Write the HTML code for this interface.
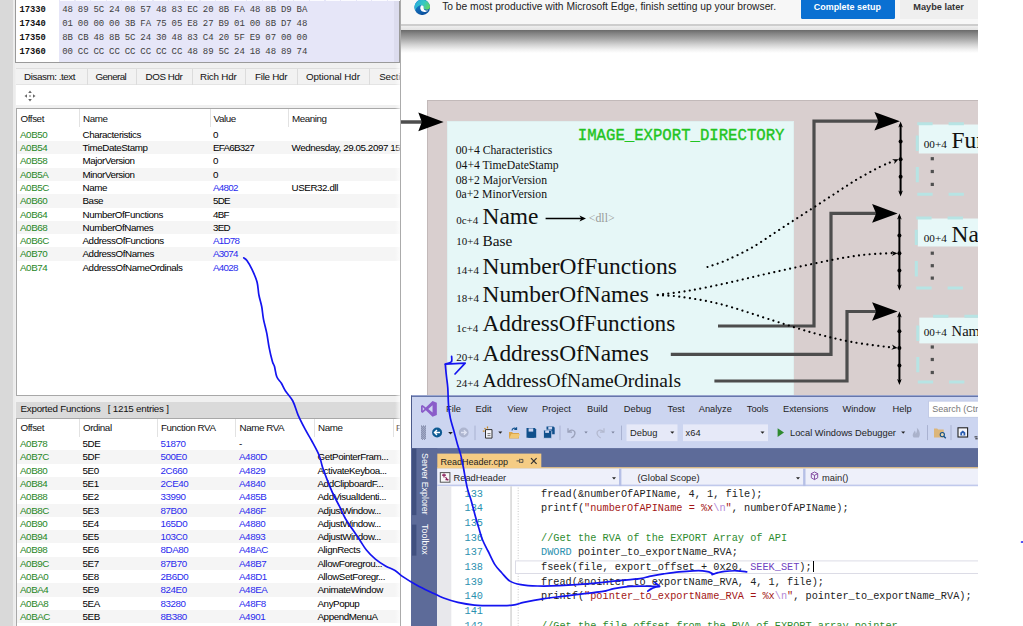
<!DOCTYPE html>
<html><head><meta charset="utf-8"><title>PE export directory</title>
<style>
*{box-sizing:border-box;margin:0;padding:0}
html,body{width:1023px;height:626px;overflow:hidden;background:#fff}
body{position:relative;font-family:"Liberation Sans",sans-serif;font-size:9px;color:#000}
.abs{position:absolute}
.t{position:absolute;white-space:pre;line-height:1}
/* PE-bear */
#pe{position:absolute;left:0;top:0;width:401px;height:626px;background:#f0f0f0;overflow:hidden}
.hexaddr{font-family:"Liberation Mono",monospace;font-weight:bold;font-size:8.8px;color:#111}
.hexb{font-family:"Liberation Mono",monospace;font-size:9px;color:#3e3e3e}
.row{position:absolute;left:17px;width:383px;height:13.3px}
.row.alt{background:#f5f5f5}
.c{position:absolute;top:0;line-height:13.25px;white-space:pre;font-size:9.8px;letter-spacing:-0.42px}
.g{color:#1f861f}
.b{color:#2a2aee}
.hd{position:absolute;line-height:14px;font-size:9.8px;letter-spacing:-0.42px;color:#111;white-space:pre}
.vl{position:absolute;width:1px;background:#e2e2e2}
/* diagram */
.ser{font-family:"Liberation Serif",serif;color:#111}
/* VS */
.vsm{position:absolute;top:403px;font-size:9.6px;color:#1e1e1e;line-height:12px;white-space:pre}
.code{position:absolute;left:541px;font-family:"Liberation Mono",monospace;font-size:10.26px;line-height:14.6px;white-space:pre;color:#222}
.ln{position:absolute;left:464.5px;font-family:"Liberation Mono",monospace;font-size:10.26px;line-height:14.6px;color:#2b91af;white-space:pre}
.cm{color:#2e8b2e}.st{color:#a31515}.kw{color:#2b91af}.es{color:#b48ad8}.mc{color:#6f42c1}
</style></head><body>
<div id="pe">
<div class="abs" style="left:0;top:0;width:13px;height:626px;background:#d9d9d9"></div>
<div class="abs" style="left:13px;top:0;width:2px;height:626px;background:#ececec"></div>
<div class="abs" style="left:15px;top:0;width:385px;height:62.6px;background:#fff;border:1px solid #9a9a9a;border-top:none"></div>
<div class="abs" style="left:59px;top:0;width:335px;height:62px;background:#e6e6f8"></div>
<div class="abs" style="left:394px;top:0;width:5px;height:62px;background:#dcdcee"></div>
<div class="abs" style="left:60.00px;top:0;width:14.4px;height:1.4px;background:#fbfbff"></div>
<div class="abs" style="left:75.62px;top:0;width:14.4px;height:1.4px;background:#fbfbff"></div>
<div class="abs" style="left:91.24px;top:0;width:14.4px;height:1.4px;background:#fbfbff"></div>
<div class="abs" style="left:106.86px;top:0;width:14.4px;height:1.4px;background:#fbfbff"></div>
<div class="abs" style="left:122.48px;top:0;width:14.4px;height:1.4px;background:#fbfbff"></div>
<div class="abs" style="left:138.10px;top:0;width:14.4px;height:1.4px;background:#fbfbff"></div>
<div class="abs" style="left:153.72px;top:0;width:14.4px;height:1.4px;background:#fbfbff"></div>
<div class="abs" style="left:169.34px;top:0;width:14.4px;height:1.4px;background:#fbfbff"></div>
<div class="abs" style="left:184.96px;top:0;width:14.4px;height:1.4px;background:#fbfbff"></div>
<div class="abs" style="left:200.58px;top:0;width:14.4px;height:1.4px;background:#fbfbff"></div>
<div class="abs" style="left:216.20px;top:0;width:14.4px;height:1.4px;background:#fbfbff"></div>
<div class="abs" style="left:231.82px;top:0;width:14.4px;height:1.4px;background:#fbfbff"></div>
<div class="abs" style="left:247.44px;top:0;width:14.4px;height:1.4px;background:#fbfbff"></div>
<div class="abs" style="left:263.06px;top:0;width:14.4px;height:1.4px;background:#fbfbff"></div>
<div class="abs" style="left:278.68px;top:0;width:14.4px;height:1.4px;background:#fbfbff"></div>
<div class="abs" style="left:294.30px;top:0;width:14.4px;height:1.4px;background:#fbfbff"></div>
<div class="abs" style="left:309.92px;top:0;width:14.4px;height:1.4px;background:#fbfbff"></div>
<div class="abs" style="left:325.54px;top:0;width:14.4px;height:1.4px;background:#fbfbff"></div>
<div class="abs" style="left:341.16px;top:0;width:14.4px;height:1.4px;background:#fbfbff"></div>
<div class="abs" style="left:356.78px;top:0;width:14.4px;height:1.4px;background:#fbfbff"></div>
<div class="abs" style="left:372.40px;top:0;width:14.4px;height:1.4px;background:#fbfbff"></div>
<div class="abs" style="left:388.02px;top:0;width:14.4px;height:1.4px;background:#fbfbff"></div>
<div class="t hexaddr" style="left:19.5px;top:5.80px">17330</div>
<div class="t hexb" style="left:62.20px;top:5.70px">48</div>
<div class="t hexb" style="left:77.82px;top:5.70px">89</div>
<div class="t hexb" style="left:93.44px;top:5.70px">5C</div>
<div class="t hexb" style="left:109.06px;top:5.70px">24</div>
<div class="t hexb" style="left:124.68px;top:5.70px">08</div>
<div class="t hexb" style="left:140.30px;top:5.70px">57</div>
<div class="t hexb" style="left:155.92px;top:5.70px">48</div>
<div class="t hexb" style="left:171.54px;top:5.70px">83</div>
<div class="t hexb" style="left:187.16px;top:5.70px">EC</div>
<div class="t hexb" style="left:202.78px;top:5.70px">20</div>
<div class="t hexb" style="left:218.40px;top:5.70px">8B</div>
<div class="t hexb" style="left:234.02px;top:5.70px">FA</div>
<div class="t hexb" style="left:249.64px;top:5.70px">48</div>
<div class="t hexb" style="left:265.26px;top:5.70px">8B</div>
<div class="t hexb" style="left:280.88px;top:5.70px">D9</div>
<div class="t hexb" style="left:296.50px;top:5.70px">BA</div>
<div class="t hexaddr" style="left:19.5px;top:19.80px">17340</div>
<div class="t hexb" style="left:62.20px;top:19.70px">01</div>
<div class="t hexb" style="left:77.82px;top:19.70px">00</div>
<div class="t hexb" style="left:93.44px;top:19.70px">00</div>
<div class="t hexb" style="left:109.06px;top:19.70px">00</div>
<div class="t hexb" style="left:124.68px;top:19.70px">3B</div>
<div class="t hexb" style="left:140.30px;top:19.70px">FA</div>
<div class="t hexb" style="left:155.92px;top:19.70px">75</div>
<div class="t hexb" style="left:171.54px;top:19.70px">05</div>
<div class="t hexb" style="left:187.16px;top:19.70px">E8</div>
<div class="t hexb" style="left:202.78px;top:19.70px">27</div>
<div class="t hexb" style="left:218.40px;top:19.70px">B9</div>
<div class="t hexb" style="left:234.02px;top:19.70px">01</div>
<div class="t hexb" style="left:249.64px;top:19.70px">00</div>
<div class="t hexb" style="left:265.26px;top:19.70px">8B</div>
<div class="t hexb" style="left:280.88px;top:19.70px">D7</div>
<div class="t hexb" style="left:296.50px;top:19.70px">48</div>
<div class="t hexaddr" style="left:19.5px;top:33.80px">17350</div>
<div class="t hexb" style="left:62.20px;top:33.70px">8B</div>
<div class="t hexb" style="left:77.82px;top:33.70px">CB</div>
<div class="t hexb" style="left:93.44px;top:33.70px">48</div>
<div class="t hexb" style="left:109.06px;top:33.70px">8B</div>
<div class="t hexb" style="left:124.68px;top:33.70px">5C</div>
<div class="t hexb" style="left:140.30px;top:33.70px">24</div>
<div class="t hexb" style="left:155.92px;top:33.70px">30</div>
<div class="t hexb" style="left:171.54px;top:33.70px">48</div>
<div class="t hexb" style="left:187.16px;top:33.70px">83</div>
<div class="t hexb" style="left:202.78px;top:33.70px">C4</div>
<div class="t hexb" style="left:218.40px;top:33.70px">20</div>
<div class="t hexb" style="left:234.02px;top:33.70px">5F</div>
<div class="t hexb" style="left:249.64px;top:33.70px">E9</div>
<div class="t hexb" style="left:265.26px;top:33.70px">07</div>
<div class="t hexb" style="left:280.88px;top:33.70px">00</div>
<div class="t hexb" style="left:296.50px;top:33.70px">00</div>
<div class="t hexaddr" style="left:19.5px;top:47.80px">17360</div>
<div class="t hexb" style="left:62.20px;top:47.70px">00</div>
<div class="t hexb" style="left:77.82px;top:47.70px">CC</div>
<div class="t hexb" style="left:93.44px;top:47.70px">CC</div>
<div class="t hexb" style="left:109.06px;top:47.70px">CC</div>
<div class="t hexb" style="left:124.68px;top:47.70px">CC</div>
<div class="t hexb" style="left:140.30px;top:47.70px">CC</div>
<div class="t hexb" style="left:155.92px;top:47.70px">CC</div>
<div class="t hexb" style="left:171.54px;top:47.70px">CC</div>
<div class="t hexb" style="left:187.16px;top:47.70px">48</div>
<div class="t hexb" style="left:202.78px;top:47.70px">89</div>
<div class="t hexb" style="left:218.40px;top:47.70px">5C</div>
<div class="t hexb" style="left:234.02px;top:47.70px">24</div>
<div class="t hexb" style="left:249.64px;top:47.70px">18</div>
<div class="t hexb" style="left:265.26px;top:47.70px">48</div>
<div class="t hexb" style="left:280.88px;top:47.70px">89</div>
<div class="t hexb" style="left:296.50px;top:47.70px">74</div>
<div class="abs" style="left:16px;top:68px;width:385px;height:17px;background:#f2f2f2;border-top:1px solid #dedede;border-bottom:1px solid #e4e4e4"></div>
<div class="hd" style="left:24px;top:69.9px;font-size:9.8px;letter-spacing:-0.42px">Disasm: .text</div>
<div class="hd" style="left:95.5px;top:69.9px;font-size:9.8px;letter-spacing:-0.6px">General</div>
<div class="hd" style="left:145.5px;top:69.9px;font-size:9.8px;letter-spacing:-0.4px">DOS Hdr</div>
<div class="hd" style="left:200px;top:69.9px;font-size:9.8px;letter-spacing:-0.2px">Rich Hdr</div>
<div class="hd" style="left:255px;top:69.9px;font-size:9.8px;letter-spacing:-0.25px">File Hdr</div>
<div class="hd" style="left:306px;top:69.9px;font-size:9.8px;letter-spacing:-0.1px">Optional Hdr</div>
<div class="hd" style="left:379.2px;top:69.9px;font-size:9.8px;letter-spacing:-0.1px">Sectio</div>
<div class="vl" style="left:86.5px;top:69px;height:16px;background:#dcdcdc"></div>
<div class="vl" style="left:136px;top:69px;height:16px;background:#dcdcdc"></div>
<div class="vl" style="left:191.5px;top:69px;height:16px;background:#dcdcdc"></div>
<div class="vl" style="left:245px;top:69px;height:16px;background:#dcdcdc"></div>
<div class="vl" style="left:296.5px;top:69px;height:16px;background:#dcdcdc"></div>
<div class="vl" style="left:369px;top:69px;height:16px;background:#dcdcdc"></div>
<div class="abs" style="left:16px;top:85px;width:385px;height:20px;background:#fff"></div>
<svg class="abs" style="left:24px;top:90px" width="12" height="12" viewBox="0 0 12 12"><g fill="#666"><path d="M6 0.5 L7.8 3 H4.2Z"/><path d="M6 11.5 L7.8 9 H4.2Z"/><path d="M0.5 6 L3 4.2 V7.8Z"/><path d="M11.5 6 L9 4.2 V7.8Z"/><rect x="5.3" y="5.3" width="1.4" height="1.4"/></g></svg>
<div class="abs" style="left:16px;top:108px;width:385px;height:288px;background:#fff;border:1px solid #a8a8a8;border-right:none"></div>
<div class="hd" style="left:20.5px;top:111.5px">Offset</div>
<div class="hd" style="left:83px;top:111.5px">Name</div>
<div class="hd" style="left:213.5px;top:111.5px">Value</div>
<div class="hd" style="left:292px;top:111.5px">Meaning</div>
<div class="vl" style="left:79px;top:109px;height:18px"></div>
<div class="vl" style="left:210px;top:109px;height:18px"></div>
<div class="vl" style="left:288px;top:109px;height:18px"></div>
<div class="row" style="top:127.90px"><span class="c g" style="left:3px">A0B50</span><span class="c" style="left:65.5px">Characteristics</span><span class="c" style="left:196px;letter-spacing:-0.75px">0</span><span class="c" style="left:274.5px"></span></div>
<div class="row alt" style="top:141.18px"><span class="c g" style="left:3px">A0B54</span><span class="c" style="left:65.5px">TimeDateStamp</span><span class="c" style="left:196px;letter-spacing:-0.75px">EFA6B327</span><span class="c" style="left:274.5px">Wednesday, 29.05.2097 15:</span></div>
<div class="row" style="top:154.46px"><span class="c g" style="left:3px">A0B58</span><span class="c" style="left:65.5px">MajorVersion</span><span class="c" style="left:196px;letter-spacing:-0.75px">0</span><span class="c" style="left:274.5px"></span></div>
<div class="row alt" style="top:167.74px"><span class="c g" style="left:3px">A0B5A</span><span class="c" style="left:65.5px">MinorVersion</span><span class="c" style="left:196px;letter-spacing:-0.75px">0</span><span class="c" style="left:274.5px"></span></div>
<div class="row" style="top:181.02px"><span class="c g" style="left:3px">A0B5C</span><span class="c" style="left:65.5px">Name</span><span class="c b" style="left:196px;letter-spacing:-0.75px">A4802</span><span class="c" style="left:274.5px">USER32.dll</span></div>
<div class="row alt" style="top:194.30px"><span class="c g" style="left:3px">A0B60</span><span class="c" style="left:65.5px">Base</span><span class="c" style="left:196px;letter-spacing:-0.75px">5DE</span><span class="c" style="left:274.5px"></span></div>
<div class="row" style="top:207.58px"><span class="c g" style="left:3px">A0B64</span><span class="c" style="left:65.5px">NumberOfFunctions</span><span class="c" style="left:196px;letter-spacing:-0.75px">4BF</span><span class="c" style="left:274.5px"></span></div>
<div class="row alt" style="top:220.86px"><span class="c g" style="left:3px">A0B68</span><span class="c" style="left:65.5px">NumberOfNames</span><span class="c" style="left:196px;letter-spacing:-0.75px">3ED</span><span class="c" style="left:274.5px"></span></div>
<div class="row" style="top:234.14px"><span class="c g" style="left:3px">A0B6C</span><span class="c" style="left:65.5px">AddressOfFunctions</span><span class="c b" style="left:196px;letter-spacing:-0.75px">A1D78</span><span class="c" style="left:274.5px"></span></div>
<div class="row alt" style="top:247.42px"><span class="c g" style="left:3px">A0B70</span><span class="c" style="left:65.5px">AddressOfNames</span><span class="c b" style="left:196px;letter-spacing:-0.75px">A3074</span><span class="c" style="left:274.5px"></span></div>
<div class="row" style="top:260.70px"><span class="c g" style="left:3px">A0B74</span><span class="c" style="left:65.5px">AddressOfNameOrdinals</span><span class="c b" style="left:196px;letter-spacing:-0.75px">A4028</span><span class="c" style="left:274.5px"></span></div>
<div class="abs" style="left:16px;top:402px;width:385px;height:15.5px;background:#dadada"></div>
<div class="hd" style="left:20.5px;top:402.3px;letter-spacing:-0.25px">Exported Functions   [ 1215 entries ]</div>
<div class="abs" style="left:16px;top:417.5px;width:385px;height:220px;background:#fff;border:1px solid #a8a8a8;border-right:none"></div>
<div class="hd" style="left:20.5px;top:421px">Offset</div>
<div class="hd" style="left:83px;top:421px">Ordinal</div>
<div class="hd" style="left:161px;top:421px">Function RVA</div>
<div class="hd" style="left:239.5px;top:421px">Name RVA</div>
<div class="hd" style="left:318px;top:421px">Name</div>
<div class="hd" style="left:396px;top:421px">F</div>
<div class="vl" style="left:79px;top:418.5px;height:18px"></div>
<div class="vl" style="left:157px;top:418.5px;height:18px"></div>
<div class="vl" style="left:235px;top:418.5px;height:18px"></div>
<div class="vl" style="left:314px;top:418.5px;height:18px"></div>
<div class="vl" style="left:392.5px;top:418.5px;height:18px"></div>
<div class="row" style="top:437.10px"><span class="c g" style="left:3px">A0B78</span><span class="c" style="left:65.5px">5DE</span><span class="c b" style="left:143.5px">51870</span><span class="c" style="left:222px">-</span><span class="c" style="left:300.5px"></span></div>
<div class="row alt" style="top:450.39px"><span class="c g" style="left:3px">A0B7C</span><span class="c" style="left:65.5px">5DF</span><span class="c b" style="left:143.5px">500E0</span><span class="c b" style="left:222px">A480D</span><span class="c" style="left:300.5px">GetPointerFram...</span></div>
<div class="row" style="top:463.68px"><span class="c g" style="left:3px">A0B80</span><span class="c" style="left:65.5px">5E0</span><span class="c b" style="left:143.5px">2C660</span><span class="c b" style="left:222px">A4829</span><span class="c" style="left:300.5px">ActivateKeyboa...</span></div>
<div class="row alt" style="top:476.97px"><span class="c g" style="left:3px">A0B84</span><span class="c" style="left:65.5px">5E1</span><span class="c b" style="left:143.5px">2CE40</span><span class="c b" style="left:222px">A4840</span><span class="c" style="left:300.5px">AddClipboardF...</span></div>
<div class="row" style="top:490.26px"><span class="c g" style="left:3px">A0B88</span><span class="c" style="left:65.5px">5E2</span><span class="c b" style="left:143.5px">33990</span><span class="c b" style="left:222px">A485B</span><span class="c" style="left:300.5px">AddVisualIdenti...</span></div>
<div class="row alt" style="top:503.55px"><span class="c g" style="left:3px">A0B8C</span><span class="c" style="left:65.5px">5E3</span><span class="c b" style="left:143.5px">87B00</span><span class="c b" style="left:222px">A486F</span><span class="c" style="left:300.5px">AdjustWindow...</span></div>
<div class="row" style="top:516.84px"><span class="c g" style="left:3px">A0B90</span><span class="c" style="left:65.5px">5E4</span><span class="c b" style="left:143.5px">165D0</span><span class="c b" style="left:222px">A4880</span><span class="c" style="left:300.5px">AdjustWindow...</span></div>
<div class="row alt" style="top:530.13px"><span class="c g" style="left:3px">A0B94</span><span class="c" style="left:65.5px">5E5</span><span class="c b" style="left:143.5px">103C0</span><span class="c b" style="left:222px">A4893</span><span class="c" style="left:300.5px">AdjustWindow...</span></div>
<div class="row" style="top:543.42px"><span class="c g" style="left:3px">A0B98</span><span class="c" style="left:65.5px">5E6</span><span class="c b" style="left:143.5px">8DA80</span><span class="c b" style="left:222px">A48AC</span><span class="c" style="left:300.5px">AlignRects</span></div>
<div class="row alt" style="top:556.71px"><span class="c g" style="left:3px">A0B9C</span><span class="c" style="left:65.5px">5E7</span><span class="c b" style="left:143.5px">87B70</span><span class="c b" style="left:222px">A48B7</span><span class="c" style="left:300.5px">AllowForegrou...</span></div>
<div class="row" style="top:570.00px"><span class="c g" style="left:3px">A0BA0</span><span class="c" style="left:65.5px">5E8</span><span class="c b" style="left:143.5px">2B6D0</span><span class="c b" style="left:222px">A48D1</span><span class="c" style="left:300.5px">AllowSetForegr...</span></div>
<div class="row alt" style="top:583.29px"><span class="c g" style="left:3px">A0BA4</span><span class="c" style="left:65.5px">5E9</span><span class="c b" style="left:143.5px">824E0</span><span class="c b" style="left:222px">A48EA</span><span class="c" style="left:300.5px">AnimateWindow</span></div>
<div class="row" style="top:596.58px"><span class="c g" style="left:3px">A0BA8</span><span class="c" style="left:65.5px">5EA</span><span class="c b" style="left:143.5px">83280</span><span class="c b" style="left:222px">A48F8</span><span class="c" style="left:300.5px">AnyPopup</span></div>
<div class="row alt" style="top:609.87px"><span class="c g" style="left:3px">A0BAC</span><span class="c" style="left:65.5px">5EB</span><span class="c b" style="left:143.5px">8B380</span><span class="c b" style="left:222px">A4901</span><span class="c" style="left:300.5px">AppendMenuA</span></div>
<div class="abs" style="left:395px;top:63px;width:5px;height:563px;background:linear-gradient(90deg,rgba(255,255,255,0),rgba(255,255,255,.7))"></div>
<div class="abs" style="left:400px;top:0;width:1px;height:626px;background:#ababab"></div>
</div><div class="abs" id="edge" style="left:401px;top:0;width:577px;height:626px;background:#fff;overflow:hidden">
<div class="abs" style="left:0;top:0;width:577px;height:24px;background:#f7f7f7"></div>
<div class="abs" style="left:0;top:23.8px;width:577px;height:1.8px;background:#cdcdcd"></div>
<div class="abs" style="left:0;top:25.6px;width:577px;height:4.6px;background:linear-gradient(180deg,#eeeeee,#e2e2e2)"></div>
<div class="abs" style="left:0;top:30px;width:577px;height:23px;background:linear-gradient(180deg,#6a6a6a 0%,#828282 14%,#a6a6a6 38%,#cfcfcf 62%,#efefef 84%,#fff 100%)"></div>
<svg class="abs" style="left:12.5px;top:-1.1px" width="16.4" height="16.4" viewBox="0 0 18 18">
<defs><linearGradient id="eg1" x1="0.2" y1="0" x2="0.6" y2="1"><stop offset="0" stop-color="#1b8ad6"/><stop offset="1" stop-color="#0b4f9c"/></linearGradient>
<linearGradient id="eg2" x1="0" y1="0.2" x2="1" y2="0.6"><stop offset="0" stop-color="#27a9e0"/><stop offset="0.55" stop-color="#36c8c2"/><stop offset="1" stop-color="#62d563"/></linearGradient></defs>
<circle cx="9" cy="9" r="8.6" fill="url(#eg1)"/>
<path d="M0.6 8 A8.6 8.6 0 0 1 17.6 8.4 C17.7 11 15.4 12 13 11.6 C11.2 11.3 10.4 10.3 10.6 9.2 C10.8 8 9.8 6.8 8 6.8 C5 6.8 2.2 9 1.6 12.4 A8.6 8.6 0 0 1 0.6 8Z" fill="url(#eg2)"/>
<path d="M10.6 9.3 C10.9 8 9.9 6.9 8.3 6.9 C6.6 8.2 6.3 10.8 7.8 12.6 C9.6 14.7 13 14.8 15.6 12.6 C13.4 13.2 10.2 12.2 10.6 9.3Z" fill="#fff"/>
</svg>
<div class="t" style="left:41.2px;top:2.4px;font-size:10.25px;color:#222">To be most productive with Microsoft Edge, finish setting up your browser.</div>
<div class="abs" style="left:400px;top:-2px;width:93.5px;height:21.4px;background:#0a70d2;border-radius:1.5px"></div>
<div class="t" style="left:412.8px;top:2.9px;font-size:8.95px;font-weight:bold;color:#fff">Complete setup</div>
<div class="abs" style="left:499px;top:-2px;width:80px;height:21px;background:#efefef"></div>
<div class="t" style="left:512.3px;top:2.9px;font-size:9.2px;font-weight:bold;color:#333">Maybe later</div>
<div class="abs" style="left:26px;top:99.5px;width:560px;height:300px;background:#d9cfcf;border:1px solid #c2b9b9"></div>
<div class="abs" style="left:46px;top:120.5px;width:347px;height:280px;background:#e6f7f7;border:1px solid #dff0f0"></div>
<svg class="abs" style="left:0;top:105px" width="50" height="34" viewBox="0 0 50 34"><path d="M0 17 H22" stroke="#4d4d4d" stroke-width="3.5" fill="none"/><path d="M42.7 17 L17.3 7.4 L20.8 17 L17.3 26.2Z" fill="#000"/></svg>
<div class="t" style="left:176.8px;top:128.7px;font-family:'Liberation Mono',monospace;font-size:15.66px;color:#22c422;-webkit-text-stroke:0.35px #22c422">IMAGE_EXPORT_DIRECTORY</div>
<div class="t ser" style="left:54.7px;top:145.10px;font-size:11.7px">00+4 Characteristics</div>
<div class="t ser" style="left:54.7px;top:159.90px;font-size:11.7px">04+4 TimeDateStamp</div>
<div class="t ser" style="left:54.7px;top:174.70px;font-size:11.7px">08+2 MajorVersion</div>
<div class="t ser" style="left:54.7px;top:189.10px;font-size:11.7px">0a+2 MinorVersion</div>
<div class="t ser" style="left:55.2px;top:215.19px;font-size:11px">0c+4</div>
<div class="t ser" style="left:81.5px;top:204.80px;font-size:23.4px">Name</div>
<div class="t ser" style="left:55.2px;top:236.39px;font-size:11px">10+4</div>
<div class="t ser" style="left:81.5px;top:232.79px;font-size:15.3px">Base</div>
<div class="t ser" style="left:55.2px;top:265.19px;font-size:11px">14+4</div>
<div class="t ser" style="left:81.5px;top:254.72px;font-size:23.5px">NumberOfFunctions</div>
<div class="t ser" style="left:55.2px;top:293.39px;font-size:11px">18+4</div>
<div class="t ser" style="left:81.5px;top:283.00px;font-size:23.4px">NumberOfNames</div>
<div class="t ser" style="left:55.2px;top:322.69px;font-size:11px">1c+4</div>
<div class="t ser" style="left:81.5px;top:312.39px;font-size:23.3px">AddressOfFunctions</div>
<div class="t ser" style="left:55.2px;top:352.19px;font-size:11px">20+4</div>
<div class="t ser" style="left:81.5px;top:341.80px;font-size:23.4px">AddressOfNames</div>
<div class="t ser" style="left:55.2px;top:378.29px;font-size:11px">24+4</div>
<div class="t ser" style="left:81.5px;top:371.13px;font-size:19.55px">AddressOfNameOrdinals</div>
<div class="t ser" style="left:187.8px;top:212.6px;font-size:11.8px;color:#999">&lt;dll&gt;</div>
<svg class="abs" style="left:0;top:0" width="577" height="626" viewBox="401 0 577 626">
<g fill="none" stroke="#4d4d4d" stroke-width="3.2" stroke-linejoin="miter">
<path d="M718 326 H814 V121.2 H880"/>
<path d="M670.8 354.3 H831 V213.4 H878"/>
<path d="M714.4 381 H847 V311.5 H878"/>
</g>
<g fill="#000">
<path d="M899.9 121.3 L874.4 112.0 L878.4 121.3 L874.4 130.6Z"/>
<path d="M897.6 213.4 L872.1 204.1 L876.1 213.4 L872.1 222.70000000000002Z"/>
<path d="M897.6 311.5 L872.1 302.2 L876.1 311.5 L872.1 320.8Z"/>
</g>
<path d="M545.6 218.5 H582" stroke="#000" stroke-width="1.6" fill="none"/><path d="M586 218.5 L579.5 215.6 L581.2 218.5 L579.5 221.4Z" fill="#000"/>
<path d="M900.6 124.5 V193.4" stroke="#000" stroke-width="2" fill="none"/>
<path d="M900.6 121.5 L898.3000000000001 127.5 L900.6 126.0 L902.9 127.5Z" fill="#000"/>
<path d="M900.6 196.4 L898.3000000000001 190.4 L900.6 191.9 L902.9 190.4Z" fill="#000"/>
<circle cx="900.6" cy="141.6" r="2" fill="#000"/>
<circle cx="900.6" cy="159.3" r="2" fill="#000"/>
<circle cx="900.6" cy="176.8" r="2" fill="#000"/>
<path d="M899.4 216.5 V287.6" stroke="#000" stroke-width="2" fill="none"/>
<path d="M899.4 213.5 L897.1 219.5 L899.4 218.0 L901.6999999999999 219.5Z" fill="#000"/>
<path d="M899.4 290.6 L897.1 284.6 L899.4 286.1 L901.6999999999999 284.6Z" fill="#000"/>
<circle cx="899.4" cy="235.4" r="2" fill="#000"/>
<circle cx="899.4" cy="253.2" r="2" fill="#000"/>
<circle cx="899.4" cy="270.6" r="2" fill="#000"/>
<path d="M899.4 314.5 V382" stroke="#000" stroke-width="2" fill="none"/>
<path d="M899.4 311.5 L897.1 317.5 L899.4 316.0 L901.6999999999999 317.5Z" fill="#000"/>
<path d="M899.4 385 L897.1 379 L899.4 380.5 L901.6999999999999 379Z" fill="#000"/>
<circle cx="899.4" cy="331.2" r="2" fill="#000"/>
<circle cx="899.4" cy="348" r="2" fill="#000"/>
<circle cx="899.4" cy="365.5" r="2" fill="#000"/>
<g fill="none" stroke="#000" stroke-width="2.1" stroke-dasharray="0.1 5.3" stroke-linecap="round">
<path d="M707.5 267 C710.7 265.9 719.2 263.4 726.7 260.1 C734.2 256.8 743.7 252.3 752.2 247.4 C760.7 242.5 769.3 236.2 777.8 230.7 C786.3 225.1 794.9 219.6 803.4 214.1 C811.9 208.6 820.4 203.0 828.9 197.5 C837.4 192.0 846.0 186.0 854.5 180.9 C863.0 175.8 873.4 170.1 880 166.8 C886.6 163.5 891.7 162.0 894 161"/>
<path d="M657.7 294.7 C662.8 294.1 676.8 292.7 688.3 290.8 C699.8 288.9 713.9 285.9 726.7 283.1 C739.5 280.3 752.2 277.1 765 274.2 C777.8 271.3 790.6 268.5 803.4 265.8 C816.2 263.1 831.1 260.0 841.7 258.1 C852.4 256.2 858.6 255.3 867.3 254.5 C876.0 253.7 889.5 253.2 894 253"/>
<path d="M657.7 295.3 C661.4 295.5 669.5 295.2 680 296.7 C690.5 298.2 705.0 300.2 720.7 304.2 C736.4 308.2 758.4 315.9 774 320.8 C789.6 325.7 801.6 329.8 814.6 333.3 C827.6 336.8 838.8 339.6 852 342 C865.2 344.4 887.0 346.8 894 347.8"/>
</g>
<path transform="translate(898.6 159.3) rotate(-24)" d="M0 0 L-6 -2.6 L-4.2 0 L-6 2.6Z" fill="#000"/>
<path transform="translate(897.6 253.2) rotate(-3)" d="M0 0 L-6 -2.6 L-4.2 0 L-6 2.6Z" fill="#000"/>
<path transform="translate(897.6 348) rotate(8)" d="M0 0 L-6 -2.6 L-4.2 0 L-6 2.6Z" fill="#000"/>
<rect x="918.8" y="124.5" width="70" height="29.0" fill="#e7f8f8"/>
<path d="M917.3 123.8 H990" fill="none" stroke="#b7e4e4" stroke-width="3" stroke-dasharray="15.3 16" stroke-dashoffset="0"/>
<path d="M917.3 123.8 V194.2" fill="none" stroke="#b7e4e4" stroke-width="3" stroke-dasharray="15.3 16" stroke-dashoffset="19.5"/>
<path d="M917.3 194.2 H990" fill="none" stroke="#b7e4e4" stroke-width="3" stroke-dasharray="15.3 16" stroke-dashoffset="0"/>
<rect x="930.7" y="157.1" width="3.2" height="3.2" fill="#505050"/>
<rect x="930.7" y="169.9" width="3.2" height="3.2" fill="#505050"/>
<rect x="930.7" y="182.8" width="3.2" height="3.2" fill="#505050"/>
<text x="923.7" y="147.9" font-family="Liberation Serif,serif" font-size="11.2" fill="#111">00+4</text>
<text x="951.6" y="147.9" font-family="Liberation Serif,serif" font-size="23.4" fill="#111">Functions</text>
<rect x="917.8" y="218.5" width="70" height="28.0" fill="#e7f8f8"/>
<path d="M916.3 218 H990" fill="none" stroke="#b7e4e4" stroke-width="3" stroke-dasharray="15.3 16" stroke-dashoffset="0"/>
<path d="M916.3 218 V288.1" fill="none" stroke="#b7e4e4" stroke-width="3" stroke-dasharray="15.3 16" stroke-dashoffset="19.5"/>
<path d="M916.3 288.1 H990" fill="none" stroke="#b7e4e4" stroke-width="3" stroke-dasharray="15.3 16" stroke-dashoffset="0"/>
<rect x="930.7" y="251.6" width="3.2" height="3.2" fill="#505050"/>
<rect x="930.7" y="264.09999999999997" width="3.2" height="3.2" fill="#505050"/>
<rect x="930.7" y="276.5" width="3.2" height="3.2" fill="#505050"/>
<text x="923.7" y="241.5" font-family="Liberation Serif,serif" font-size="11.2" fill="#111">00+4</text>
<text x="951.6" y="241.5" font-family="Liberation Serif,serif" font-size="23.4" fill="#111">Names</text>
<rect x="919.3" y="317.6" width="70" height="25.799999999999955" fill="#e7f8f8"/>
<path d="M917.8 316.3 H990" fill="none" stroke="#b7e4e4" stroke-width="3" stroke-dasharray="15.3 16" stroke-dashoffset="16"/>
<path d="M917.8 316.3 V382.1" fill="none" stroke="#b7e4e4" stroke-width="3" stroke-dasharray="15.3 16" stroke-dashoffset="22"/>
<path d="M917.8 382.1 H990" fill="none" stroke="#b7e4e4" stroke-width="3" stroke-dasharray="15.3 16" stroke-dashoffset="0"/>
<rect x="930.7" y="345.4" width="3.2" height="3.2" fill="#505050"/>
<rect x="930.7" y="357.9" width="3.2" height="3.2" fill="#505050"/>
<rect x="930.7" y="370.9" width="3.2" height="3.2" fill="#505050"/>
<text x="923.7" y="335.6" font-family="Liberation Serif,serif" font-size="11.2" fill="#111">00+4</text>
<text x="951.6" y="335.6" font-family="Liberation Serif,serif" font-size="14.6" fill="#111">NameOrdinals</text>
</svg>
</div><div class="abs" id="vs" style="left:411px;top:395px;width:566.5px;height:231px;background:#ccd5f0;overflow:hidden">
<svg class="abs" style="left:0;top:0" width="567" height="231" viewBox="411 394.4 567 231" font-family="Liberation Sans,sans-serif">
<rect x="411" y="394.9" width="570" height="1.5" fill="#6676ab"/><rect x="411" y="395" width="1" height="232" fill="#4c5b8c"/>
<g transform="translate(421 400.4) scale(0.66)"><path fill="#8a5cc9" d="M17.5 0 L24 2.6 V21.4 L17.5 24 L7.2 14.2 L2.4 18 L0 16.8 V7.2 L2.4 6 L7.2 9.8Z M17.5 6.6 L11 12 L17.5 17.4Z M2.6 9.2 V14.8 L5.4 12Z"/></g>
<text x="446" y="411.3" font-size="9.3" fill="#1e1e1e">File</text>
<text x="475.6" y="411.3" font-size="9.3" fill="#1e1e1e">Edit</text>
<text x="507.5" y="411.3" font-size="9.3" fill="#1e1e1e">View</text>
<text x="542" y="411.3" font-size="9.3" fill="#1e1e1e">Project</text>
<text x="587" y="411.3" font-size="9.3" fill="#1e1e1e">Build</text>
<text x="623.75" y="411.3" font-size="9.3" fill="#1e1e1e">Debug</text>
<text x="667.5" y="411.3" font-size="9.3" fill="#1e1e1e">Test</text>
<text x="698.75" y="411.3" font-size="9.3" fill="#1e1e1e">Analyze</text>
<text x="746.75" y="411.3" font-size="9.3" fill="#1e1e1e">Tools</text>
<text x="783" y="411.3" font-size="9.3" fill="#1e1e1e">Extensions</text>
<text x="842.5" y="411.3" font-size="9.3" fill="#1e1e1e">Window</text>
<text x="892.5" y="411.3" font-size="9.3" fill="#1e1e1e">Help</text>
<rect x="928.5" y="400.5" width="60" height="16.3" fill="#fff" stroke="#c3cbe6" stroke-width="1"/>
<text x="932.3" y="411.3" font-size="9" fill="#777">Search (Ctrl+Q)</text>
<g fill="#5f6788"><rect x="421" y="425" width="1" height="1"/><rect x="423" y="425" width="1" height="1"/><rect x="425" y="425" width="1" height="1"/><rect x="422" y="426" width="1" height="1"/><rect x="424" y="426" width="1" height="1"/><rect x="421" y="427" width="1" height="1"/><rect x="423" y="427" width="1" height="1"/><rect x="425" y="427" width="1" height="1"/><rect x="422" y="428" width="1" height="1"/><rect x="424" y="428" width="1" height="1"/><rect x="421" y="429" width="1" height="1"/><rect x="423" y="429" width="1" height="1"/><rect x="425" y="429" width="1" height="1"/><rect x="422" y="430" width="1" height="1"/><rect x="424" y="430" width="1" height="1"/><rect x="421" y="431" width="1" height="1"/><rect x="423" y="431" width="1" height="1"/><rect x="425" y="431" width="1" height="1"/><rect x="422" y="432" width="1" height="1"/><rect x="424" y="432" width="1" height="1"/><rect x="421" y="433" width="1" height="1"/><rect x="423" y="433" width="1" height="1"/><rect x="425" y="433" width="1" height="1"/><rect x="422" y="434" width="1" height="1"/><rect x="424" y="434" width="1" height="1"/><rect x="421" y="435" width="1" height="1"/><rect x="423" y="435" width="1" height="1"/><rect x="425" y="435" width="1" height="1"/><rect x="422" y="436" width="1" height="1"/><rect x="424" y="436" width="1" height="1"/><rect x="421" y="437" width="1" height="1"/><rect x="423" y="437" width="1" height="1"/><rect x="425" y="437" width="1" height="1"/><rect x="422" y="438" width="1" height="1"/><rect x="424" y="438" width="1" height="1"/></g>
<circle cx="437.1" cy="431.9" r="5" fill="#0e5a92"/><path d="M440 431.9 H434.8 M437 429.5 L434.5 431.9 L437 434.3" stroke="#fff" stroke-width="1.4" fill="none"/>
<path d="M448.2 431.3 h4.6 l-2.3 2.5z" fill="#222"/>
<circle cx="463.7" cy="431.9" r="4.9" fill="#adb5cf"/><path d="M461 431.9 H466 M463.9 429.6 L466.3 431.9 L463.9 434.2" stroke="#dfe3f3" stroke-width="1.3" fill="none"/>
<path d="M475 425 V439.5" stroke="#a9b2d1" stroke-width="1"/>
<path d="M485.5 429 h6.5 v8.5 h-6.5z" fill="#f4f5fb" stroke="#333" stroke-width="1"/><path d="M484.5 427.5 l1.2 1.2 M487.5 426 v1.8 M482.8 430.5 h1.8" stroke="#c9871d" stroke-width="1.2"/><path d="M487.5 433 h3 M487.5 435 h3" stroke="#555" stroke-width=".8"/>
<path d="M498.3 431 h4 l-2 2.2z" fill="#222"/>
<path d="M509 431.5 h3 l1 1 h6 v5.5 h-10z" fill="#dba54a"/><path d="M509.5 437.5 l1.8-4 h8.8 l-1.8 4z" fill="#f1c873"/><path d="M512 430 c0-2.5 3-3.2 4.2-1.4 M516.6 426.6 v2.3 h-2.3" stroke="#10508c" stroke-width="1.1" fill="none"/>
<path d="M526.5 427.5 h8.3 l1.4 1.4 v8.3 h-9.7z" fill="#10508c"/><rect x="528.6" y="427.8" width="4.6" height="3.2" fill="#ccd5f0"/><rect x="528.3" y="433.3" width="6" height="3.9" fill="#10508c"/>
<path d="M546.5 426 h7 l1.2 1.2 v6.5 h-8.2z" fill="#10508c"/><rect x="548.3" y="426.2" width="3.8" height="2.6" fill="#ccd5f0"/><path d="M543.5 429.5 h7 l1.2 1.2 v7 h-8.2z" fill="#10508c" stroke="#ccd5f0" stroke-width=".8"/><rect x="545.2" y="429.9" width="3.8" height="2.4" fill="#ccd5f0"/>
<path d="M560 425 V439.5" stroke="#a9b2d1" stroke-width="1"/>
<path d="M568.5 431.2 c2.5-3.2 7-1.6 6.4 2 c-.3 2-1.8 3.2-3.6 4.2 M568 427.6 v4 h4" stroke="#9aa1ba" stroke-width="1.3" fill="none"/>
<path d="M584.3 431 h3.4 l-1.7 2z" fill="#7d849e"/>
<path d="M603.5 431.2 c-2.5-3.2-7-1.6-6.4 2 c.3 2 1.8 3.2 3.6 4.2 M604 427.6 v4 h-4" stroke="#b3b9cf" stroke-width="1.2" fill="none"/>
<path d="M611.3 431 h3.4 l-1.7 2z" fill="#7d849e"/>
<path d="M621.5 425 V439.5" stroke="#a9b2d1" stroke-width="1"/>
<rect x="626.5" y="423.8" width="51" height="16.7" fill="#e6e9f8"/>
<text x="630" y="435.4" font-size="9.3" fill="#1e1e1e">Debug</text><path d="M670.3 431 h4 l-2 2.2z" fill="#222"/>
<rect x="683" y="423.8" width="85" height="16.7" fill="#e6e9f8"/>
<text x="685.6" y="435.4" font-size="9.3" fill="#1e1e1e">x64</text><path d="M760.5 431 h4 l-2 2.2z" fill="#222"/>
<path d="M777.6 427.6 L784 432 L777.6 436.4Z" fill="#2f8a2f"/>
<text x="790" y="435.4" font-size="9.3" fill="#1e1e1e">Local Windows Debugger</text><path d="M901.2 431 h4 l-2 2.2z" fill="#222"/>
<path d="M913.6 437 c-2-2.6 0-4.6 1.2-7 c.8 1.2 1 2.4.8 3.4 c1.2-1.4 1.8-4 1.2-6.2 c2.8 2.4 4.2 6.8 2 9.8z" fill="#aab2cb"/>
<path d="M927.5 424.5 V439.5" stroke="#a9b2d1" stroke-width="1"/>
<path d="M934 427.8 h3.2 l1 1.2 h5.5 v7.8 h-9.7z" fill="#dcb67a"/><circle cx="942.3" cy="434" r="2.1" fill="#e9d6ae" stroke="#10508c" stroke-width="1.1"/><path d="M943.8 435.6 l2 2" stroke="#10508c" stroke-width="1.3"/>
<path d="M951 424.5 V439.5" stroke="#a9b2d1" stroke-width="1"/>
<rect x="958" y="427.2" width="9.6" height="9.2" fill="#f4f5fb" stroke="#222" stroke-width="1.1"/><path d="M960.3 434.8 v-3 l2.5-2 l2.5 2 v3z" fill="#2a5db0"/><rect x="962.1" y="432.6" width="1.4" height="2.2" fill="#fff"/>
<path d="M974.5 436.3 h3 M975.3 438.2 h2.4" stroke="#222" stroke-width="1"/>
<rect x="411" y="447.5" width="570" height="20" fill="#5d6b99"/>
<rect x="411" y="447.5" width="26.3" height="180" fill="#5d6b99"/>
<rect x="412" y="448" width="4.4" height="66.5" fill="#41507f"/>
<rect x="412" y="524" width="4.4" height="31" fill="#41507f"/>
<text transform="translate(422 452.5) rotate(90)" font-size="8.9" fill="#fff">Server Explorer</text>
<text transform="translate(422 523.5) rotate(90)" font-size="8.9" fill="#fff">Toolbox</text>
<rect x="437.3" y="453" width="104" height="14.5" fill="#f5cc84"/>
<rect x="437.3" y="466.6" width="545" height="1.3" fill="#f5cc84"/>
<text x="440.5" y="464.3" font-size="9" fill="#1e1e1e">ReadHeader.cpp</text>
<path d="M516.5 460.3 h3.2 M519.7 458.2 v4.2 M520.3 458.8 h2.6 v3 h-2.6" stroke="#444" stroke-width=".9" fill="none"/>
<path d="M531 457.5 l5.6 5.8 M536.6 457.5 l-5.6 5.8" stroke="#333" stroke-width="1.2"/>
<rect x="437.3" y="468" width="545" height="17.6" fill="#eef0fa"/>
<rect x="437.3" y="484" width="545" height="1.8" fill="#c0c9ec"/>
<rect x="619" y="468" width="2.4" height="18" fill="#b6c0e6"/>
<rect x="803.1" y="468" width="2.4" height="18" fill="#b6c0e6"/>
<rect x="440.3" y="472" width="9.6" height="9.6" fill="#f8f8f8" stroke="#555" stroke-width="1"/><path d="M442 474.5 h4 M444 472.8 v4 M445.5 476.5 l2.6 3.4 M445.5 479 h3" stroke="#8a1f5c" stroke-width="1.2" fill="none"/>
<text x="453.5" y="480.3" font-size="9.3" fill="#1e1e1e">ReadHeader</text><path d="M612 476.6 h4 l-2 2.2z" fill="#222"/>
<text x="637.5" y="480.3" font-size="9.3" fill="#1e1e1e">(Global Scope)</text><path d="M796 476.6 h4 l-2 2.2z" fill="#222"/>
<path d="M811.3 473 l3.2-1.6 l3.2 1.6 v4.2 l-3.2 1.8 l-3.2-1.8z M811.3 473 l3.2 1.8 l3.2-1.8 M814.5 474.8 v4.2" stroke="#7a3f9a" stroke-width=".9" fill="none"/>
<text x="822" y="480.3" font-size="9.3" fill="#1e1e1e">main()</text>
<rect x="437.3" y="485.7" width="545" height="142" fill="#fff"/>
<rect x="437.3" y="485.7" width="14" height="142" fill="#e8e8ec"/>
<rect x="510.4" y="485.7" width="1.3" height="142" fill="#cfcfcf"/>
<path d="M518.2 487 V626" stroke="#c8c8c8" stroke-width="1" stroke-dasharray="1 1.6"/>
<rect x="515.5" y="560.3" width="470" height="12.6" fill="#fff" stroke="#dcdce6" stroke-width="1"/>
</svg>
</div>
<div class="abs" style="left:411px;top:486px;width:566.5px;height:140px;overflow:hidden">
<div class="ln" style="left:53.5px;top:0.70px">133</div>
<div class="code" style="left:130px;top:0.70px">fread(&amp;numberOfAPIName, 4, 1, file);</div>
<div class="ln" style="left:53.5px;top:15.38px">134</div>
<div class="code" style="left:130px;top:15.38px">printf(<span class="st">"numberOfAPIName = %x<span class="es">\n</span>"</span>, numberOfAPIName);</div>
<div class="ln" style="left:53.5px;top:30.06px">135</div>
<div class="ln" style="left:53.5px;top:44.74px">136</div>
<div class="code" style="left:130px;top:44.74px"><span class="cm">//Get the RVA of the EXPORT Array of API</span></div>
<div class="ln" style="left:53.5px;top:59.42px">137</div>
<div class="code" style="left:130px;top:59.42px"><span class="kw">DWORD</span> pointer_to_exportName_RVA;</div>
<div class="ln" style="left:53.5px;top:74.10px">138</div>
<div class="code" style="left:130px;top:74.10px">fseek(file, export_offset + 0x20, <span class="mc">SEEK_SET</span>);</div>
<div class="ln" style="left:53.5px;top:88.78px">139</div>
<div class="code" style="left:130px;top:88.78px">fread(&amp;pointer_to_exportName_RVA, 4, 1, file);</div>
<div class="ln" style="left:53.5px;top:103.46px">140</div>
<div class="code" style="left:130px;top:103.46px">printf(<span class="st">"pointer_to_exportName_RVA = %x<span class="es">\n</span>"</span>, pointer_to_exportName_RVA);</div>
<div class="ln" style="left:53.5px;top:118.14px">141</div>
<div class="ln" style="left:53.5px;top:132.82px">142</div>
<div class="code" style="left:130px;top:132.82px"><span class="cm">//Get the file offset from the RVA of EXPORT array pointer</span></div>
<div class="abs" style="left:401.5px;top:75px;width:1px;height:11px;background:#000"></div>
</div><svg class="abs" style="left:0;top:0;pointer-events:none" width="1023" height="626" viewBox="0 0 1023 626"><g fill="none" stroke="#1414f0" stroke-width="1.7" stroke-linecap="round" stroke-linejoin="round">
<path d="M243.8 257.9 C244.3 258.3 245.5 258.6 246.9 260.5 C248.3 262.4 250.3 265.8 252 269.4 C253.7 273.0 256.0 277.9 257.1 282.2 C258.2 286.5 258.1 290.9 258.9 295 C259.7 299.1 260.9 302.4 261.7 306.5 C262.5 310.6 262.6 314.8 263.5 319.3 C264.4 323.8 265.9 328.7 266.8 333.4 C267.7 338.1 268.2 342.7 269.1 347.4 C270.0 352.1 271.5 358.3 272.4 361.5 C273.3 364.7 273.8 364.1 274.5 366.6 C275.2 369.2 275.7 374.0 276.8 376.8 C277.9 379.6 279.9 380.8 281.4 383.2 C282.8 385.6 283.6 388.0 285.5 391 C287.4 394.0 290.7 397.0 292.8 401 C294.9 405.0 296.1 410.4 298.1 415.1 C300.2 419.8 302.8 424.8 305.1 429.2 C307.4 433.6 309.8 437.1 312.1 441.5 C314.5 445.9 317.4 451.1 319.2 455.5 C321.0 459.9 321.2 463.4 322.7 467.8 C324.2 472.2 326.2 477.5 328 481.9 C329.8 486.3 331.3 490.1 333.2 494.2 C335.1 498.3 337.4 502.3 339.5 506.4 C341.6 510.5 343.3 514.9 345.5 518.7 C347.7 522.5 350.1 525.8 352.5 529.3 C354.9 532.8 357.2 536.3 359.6 539.8 C362.0 543.3 364.0 547.1 366.6 550.3 C369.2 553.5 372.2 556.5 375.4 559.1 C378.6 561.8 382.6 564.3 385.9 566.2 C389.2 568.1 392.1 568.7 395 570.5 C397.9 572.3 399.6 574.4 403.2 576.9 C406.8 579.4 412.3 582.7 416.9 585.2 C421.5 587.7 426.0 589.8 430.6 592 C435.2 594.2 439.8 596.6 444.3 598.3 C448.9 600.0 452.9 601.3 457.9 602.4 C462.9 603.5 468.5 604.5 474.4 605.1 C480.3 605.7 487.1 605.7 493.5 605.7 C499.9 605.7 507.7 605.7 512.7 605.1 C517.7 604.5 518.6 603.5 523.6 602.4 C528.6 601.3 535.9 599.8 542.8 598.8 C549.6 597.8 557.4 597.0 564.7 596.1 C572.0 595.2 580.2 594.2 586.6 593.4 C593.0 592.6 598.5 592.2 603 591.4 C607.5 590.6 609.8 589.5 613.9 588.7 C618.0 587.9 623.0 587.0 627.6 586.6 C632.2 586.2 637.2 586.2 641.3 586.2 C645.4 586.2 649.3 586.3 652.3 586.3 C655.3 586.3 658.3 586.4 659.5 586.4"/>
<path d="M445.3 364.2 C445.4 364.8 445.4 365.8 445.6 368 C445.8 370.2 446.2 374.2 446.6 377.5 C447.0 380.8 447.5 383.5 447.8 388 C448.1 392.5 448.1 399.6 448.5 404.6 C448.9 409.6 449.5 413.8 450.3 417.9 C451.1 422.0 452.3 425.1 453.5 429.5 C454.7 433.9 456.3 440.2 457.5 444.4 C458.7 448.5 459.7 450.8 460.6 454.4 C461.5 458.0 462.0 460.5 463.1 466 C464.2 471.5 465.9 481.9 467.2 487.6 C468.5 493.3 469.7 495.4 471 500 C472.3 504.6 473.8 510.5 475 515 C476.2 519.5 477.2 522.8 478.5 527 C479.8 531.2 481.0 536.0 482.6 540 C484.2 544.0 485.9 546.9 488 551 C490.1 555.1 492.6 561.0 494.9 564.6 C497.2 568.2 499.2 570.0 501.7 572.8 C504.2 575.5 506.7 579.1 509.9 581.1 C513.1 583.1 516.3 583.8 520.9 584.6 C525.5 585.4 530.9 585.8 537.3 586 C543.7 586.2 551.0 586.1 559.2 585.7 C567.4 585.3 577.5 584.6 586.6 583.8 C595.7 583.0 605.0 582.0 613.9 581.1 C622.8 580.2 634.1 579.4 640 578.6 C645.9 577.8 645.5 577.1 649.4 576.3 C653.3 575.5 658.5 574.6 663.5 573.9 C668.5 573.2 674.1 572.4 679.1 571.9 C684.1 571.4 689.3 571.0 693.2 570.8 C697.1 570.6 700.0 570.6 702.6 570.8 C705.2 571.0 707.0 571.3 708.8 571.9 C710.6 572.5 712.7 573.8 713.5 574.2"/>
<path d="M712 574.6 C713.0 574.3 715.9 573.2 718 572.6 C720.1 572.0 721.3 571.6 724.5 571.3 C727.7 571.0 733.3 570.7 737 570.8 C740.7 570.9 745.1 571.7 746.7 571.9"/>
<path d="M451.6 356.3 C451.8 358.5 452.1 360.3 451.6 361.6 C449.8 363 447 363.5 445.3 364.2 L465.2 363.2 L455 374"/>
<path d="M647.8 591.1 C651 588.5 655 587 659.5 586.4 L654.9 582.5"/>
<path d="M1021.6 542 H1023.5"/>
</g></svg></body></html>
